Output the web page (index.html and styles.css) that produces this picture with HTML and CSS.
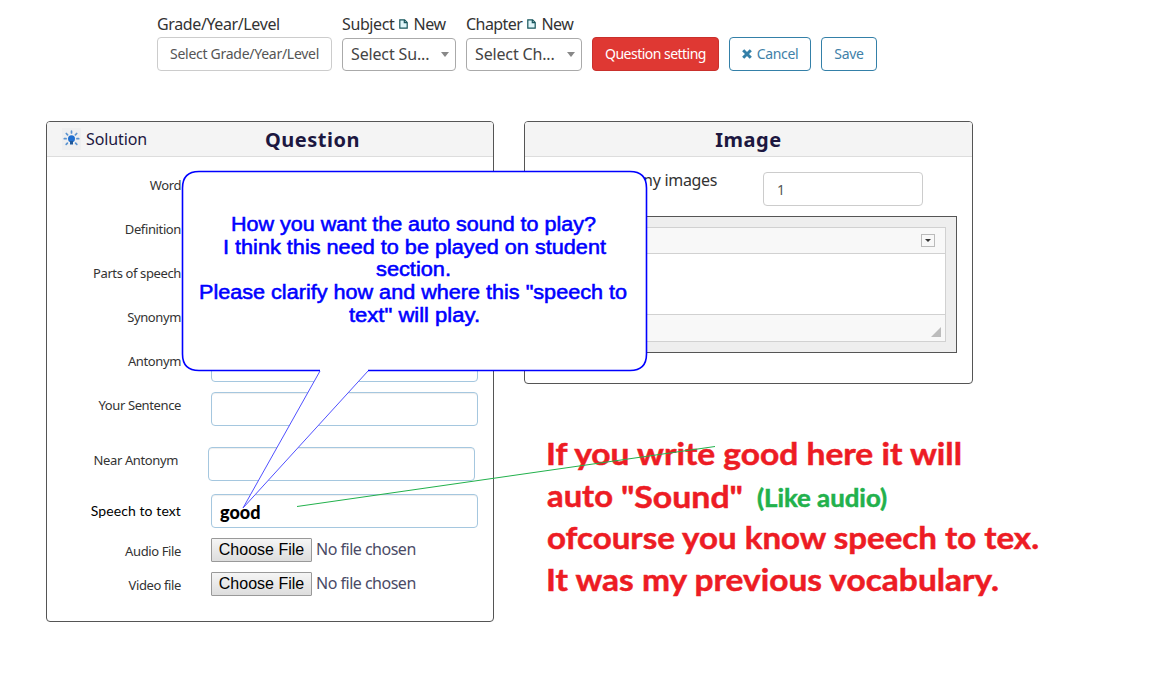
FILE: index.html
```html
<!DOCTYPE html>
<html lang="en">
<head>
<meta charset="utf-8">
<title>Vocabulary question</title>
<link rel="stylesheet" href="styles.css">
</head>
<body>
<div class="toolbar">
  <div class="field grade"><div class="caption"><span>Grade/Year/Level</span></div><div class="select-box grade-box"><span>Select Grade/Year/Level</span></div></div>
  <div class="field subject"><div class="caption"><span>Subject</span><svg class="doc" viewBox="0 0 9 10"><path d="M.8.8h4.8l2.6 2.6v5.8H.8zM5.3 1v2.7H8" fill="#dff6fa" stroke="#17555c" stroke-width="1.2"/></svg><span>New</span></div><div class="select-box"><span>Select Su...</span><i class="arrow"></i></div></div>
  <div class="field chapter"><div class="caption"><span>Chapter</span><svg class="doc" viewBox="0 0 9 10"><path d="M.8.8h4.8l2.6 2.6v5.8H.8zM5.3 1v2.7H8" fill="#dff6fa" stroke="#17555c" stroke-width="1.2"/></svg><span>New</span></div><div class="select-box"><span>Select Ch...</span><i class="arrow"></i></div></div>
  <div class="btn danger"><span>Question setting</span></div>
  <div class="btn cancel"><svg class="cross" viewBox="0 0 10 10"><path d="M1.2 1.2l7.600 7.600M8.800 1.200l-7.600 7.600" stroke="#3480a8" stroke-width="3"/></svg><span>Cancel</span></div>
  <div class="btn save"><span>Save</span></div>
</div>

<div class="panels">
  <section class="panel question">
    <header class="head">
      <div class="solution"><svg class="bulb" viewBox="0 0 19 22"><rect width="19" height="22" fill="#eeeff0"/><g stroke="#5b93cf" stroke-width="1.7" stroke-linecap="round"><path d="M9.500 3.200v1.800M4.300 5.500l1.300 1.300M14.700 5.500l-1.300 1.300M2.300 10.700h1.800M14.900 10.700h1.800M4.200 16.300l1.200-1.200M14.800 16.300l-1.200-1.200"/></g><circle cx="9.500" cy="10.800" r="3.500" fill="#1f6fd0"/><path d="M8 13h3v3.500H8z" fill="#1d5799"/></svg><span>Solution</span></div>
      <h2>Question</h2>
    </header>
    <div class="form">
      <div class="row"><label>Word</label><div class="input"></div></div>
      <div class="row"><label>Definition</label><div class="input"></div></div>
      <div class="row"><label>Parts of speech</label><div class="input"></div></div>
      <div class="row"><label>Synonym</label><div class="input"></div></div>
      <div class="row"><label>Antonym</label><div class="input"></div></div>
      <div class="row"><label>Your Sentence</label><div class="input"></div></div>
      <div class="row near"><label>Near Antonym</label><div class="input"></div></div>
      <div class="row speech"><label>Speech to text</label><div class="input"><span>good</span></div></div>
      <div class="row file"><label>Audio File</label><div class="choose">Choose File</div><span class="none">No file chosen</span></div>
      <div class="row file"><label>Video file</label><div class="choose">Choose File</div><span class="none">No file chosen</span></div>
    </div>
  </section>
  <section class="panel image">
    <header class="head"><h2>Image</h2></header>
    <div class="count"><span>How many images</span><div class="number">1</div></div>
    <div class="editor-wrap"><div class="editor">
      <div class="tools"><div class="toggle"><i></i></div></div>
      <div class="canvas"></div>
      <div class="status"><i></i></div>
    </div></div>
  </section>
</div>

<svg class="notes" viewBox="0 0 1149 694" width="1149" height="694">
  <path d="M320 371L243 508L368 371" fill="#fff" stroke="#5050ff" stroke-width="1"/>
  <path d="M320 370.500H199Q182.500 370.500 182.500 354V188Q182.500 171.500 199 171.500H630Q646.500 171.500 646.500 188V354Q646.500 370.500 630 370.500H368" fill="#fff" stroke="#00f" stroke-width="1.600"/>
  <g class="callout">
    <text x="231" y="231" textLength="365" lengthAdjust="spacingAndGlyphs">How you want the auto sound to play?</text>
    <text x="223" y="254" textLength="383" lengthAdjust="spacingAndGlyphs">I think this need to be played on student</text>
    <text x="376" y="276" textLength="75" lengthAdjust="spacingAndGlyphs">section.</text>
    <text x="199" y="299" textLength="428" lengthAdjust="spacingAndGlyphs">Please clarify how and where this "speech to</text>
    <text x="349" y="322" textLength="131" lengthAdjust="spacingAndGlyphs">text" will play.</text>
  </g>
  <g class="remark">
    <text x="546" y="465" textLength="416" lengthAdjust="spacingAndGlyphs">If you write good here it will</text>
    <text x="547" y="507" textLength="66" lengthAdjust="spacingAndGlyphs">auto</text>
    <text x="621" y="508" textLength="122" lengthAdjust="spacingAndGlyphs">"Sound"</text>
    <text x="547" y="549" textLength="492" lengthAdjust="spacingAndGlyphs">ofcourse you know speech to tex.</text>
    <text x="546" y="591" textLength="453" lengthAdjust="spacingAndGlyphs">It was my previous vocabulary.</text>
    <text class="like" x="757" y="507" textLength="130" lengthAdjust="spacingAndGlyphs">(Like audio)</text>
  </g>
  <path d="M297 506.500L715 446.500" stroke="#22b14c" stroke-width="1" fill="none"/>
</svg>
</body>
</html>
```
FILE: styles.css
```css
* { box-sizing: border-box; }
body { margin: 0; width: 1149px; height: 694px; position: relative; overflow: hidden; background: #fff; color: #333; font: 16px "Noto Sans", sans-serif; }
span, label { white-space: nowrap; }

.toolbar { display: flex; align-items: flex-start; gap: 10px; padding: 13px 0 0 157px; height: 121px; }
.caption { display: flex; align-items: center; height: 22px; letter-spacing: -.38px; }
.doc { width: 9px; height: 10px; margin: 0 5px; }
.select-box { display: flex; align-items: center; justify-content: space-between; height: 33px; margin-top: 3px; padding: 0 6px 1px 8px; border: 1px solid #aaa; border-radius: 4px; color: #444; letter-spacing: -.15px; }
.grade { width: 175px; }
.grade-box { height: 34px; margin-top: 2px; padding-left: 12px; padding-bottom: 2px; border-color: #ccc; color: #555; font-size: 14px; letter-spacing: -.27px; }
.subject { width: 114px; }
.chapter { width: 116px; }
.chapter .caption { letter-spacing: -.55px; }
.arrow { border: 4px solid transparent; border-top: 5px solid #888; border-bottom: 0; }
.btn { display: flex; align-items: center; justify-content: center; height: 34px; margin-top: 24px; padding-bottom: 2px; border: 1px solid #3480a8; border-radius: 4px; color: #3f81a8; font-size: 14px; letter-spacing: -.32px; }
.danger { width: 127px; background: #df3833; border-color: #c9302c; color: #fff; letter-spacing: -.52px; }
.cancel { width: 82px; gap: 5px; }
.save { width: 56px; }
.cross { width: 10px; height: 10px; margin-top: 2px; }

.panels { display: flex; align-items: flex-start; gap: 30px; padding-left: 46px; }
.panel { border: 1px solid #555; border-radius: 4px; overflow: hidden; }
.question { width: 448px; height: 501px; }
.image { width: 449px; height: 263px; }
.head { display: flex; justify-content: center; align-items: center; height: 35px; background: #f4f4f4; border-bottom: 1px solid #ddd; color: #1c1740; }
.head h2 { margin: 0; padding-top: 1px; font: bold 20px/33px "Noto Sans", sans-serif; letter-spacing: .5px; }
.question .head { justify-content: flex-start; }
.question h2 { margin-left: 118px; }
.solution { display: flex; align-items: center; width: 100px; padding-left: 15px; gap: 5px; letter-spacing: -.1px; }
.bulb { width: 19px; height: 22px; flex: none; }

.form { padding-top: 15px; }
.row { display: flex; height: 34px; margin-bottom: 10px; font-size: 13px; }
.row label { width: 134px; margin-right: 30px; line-height: 26px; text-align: right; letter-spacing: -.38px; }
.input { width: 267px; height: 34px; border: 1px solid #a5c7df; border-radius: 4px; box-shadow: inset 0 1px 1px rgba(0,0,0,.07); }
.near { margin: 21px 0 13px -3px; }
.speech label { color: #000; font: 14px/33px Lato, sans-serif; letter-spacing: .1px; }
.speech .input { padding-left: 8px; color: #000; font: 900 18px/34px Lato, sans-serif; }
.file { height: 24px; }
.choose { width: 101px; height: 24px; border: 1px solid #999; border-radius: 1px; background: linear-gradient(#f5f5f5, #ddd); color: #000; font: 16px/22px "Liberation Sans", sans-serif; text-align: center; }
.none { margin-left: 4px; color: #4b4b66; font-size: 16px; line-height: 23px; letter-spacing: -.5px; }

.count { display: flex; justify-content: space-between; padding: 15px 49px 0 58px; height: 59px; letter-spacing: -.3px; line-height: 17px; }
.number { width: 160px; height: 34px; padding-left: 13px; border: 1px solid #ccc; border-radius: 4px; color: #555; font-size: 14px; line-height: 34px; }
.editor-wrap { width: 417px; height: 137px; margin-left: 15px; padding: 10px; border: 1px solid #555; background: #eee; }
.editor { height: 115px; border: 1px solid #d1d1d1; background: #fff; }
.tools { display: flex; justify-content: flex-end; height: 26px; padding: 6px 10px 0; background: #f8f8f8; border-bottom: 1px solid #d1d1d1; }
.toggle { display: grid; place-items: center; width: 14px; height: 13px; border: 1px solid #bbb; }
.toggle i { border: 3px solid transparent; border-top-color: #333; border-bottom: 0; }
.canvas { height: 60px; }
.status { display: flex; justify-content: flex-end; align-items: flex-end; height: 27px; padding: 4px; background: #f8f8f8; border-top: 1px solid #d1d1d1; }
.status i { border-left: 10px solid transparent; border-bottom: 10px solid #bcbcbc; }

.notes { position: absolute; left: 0; top: 0; }
.callout { fill: #00f; stroke: #00f; stroke-width: .55px; font: 20px "Liberation Sans", sans-serif; }
.remark { fill: #ed1c24; stroke: #ed1c24; stroke-width: .5px; font: bold 31px Lato, sans-serif; }
.like { fill: #22b14c; stroke: #22b14c; font-size: 24px; }
```
